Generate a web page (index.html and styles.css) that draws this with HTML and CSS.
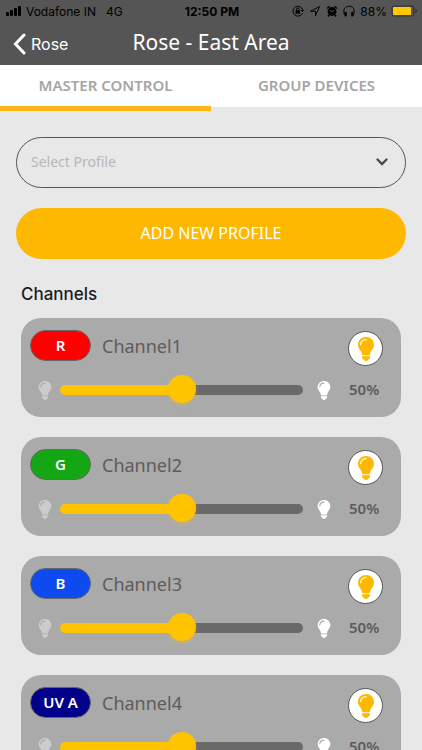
FILE: index.html
```html
<!DOCTYPE html>
<html lang="en">
<head>
  <meta charset="UTF-8">
  <meta name="viewport" content="width=device-width, initial-scale=1.0">
  <title>Rose - East Area</title>
  <link rel="stylesheet" href="styles.css">
</head>
<body>
  <svg class="symbols" aria-hidden="true">
    <symbol id="bulb" viewBox="0 0 16 24">
      <path fill="currentColor" stroke="none" d="M8 0C3.500 0 0 3.400 0 7.700C0 12 3.600 13.500 4 17.300Q4.100 18.200 5 18.200H11Q11.900 18.200 12 17.300C12.400 13.500 16 12 16 7.700C16 3.400 12.500 0 8 0Z"/>
      <path fill="currentColor" stroke="none" d="M4 19.300H12V20.600Q12 21.800 10.700 22.200Q10.200 24 8 24Q5.800 24 5.300 22.200Q4 21.800 4 20.600Z"/>
      <path fill="none" stroke-width="1.300" stroke-linecap="round" d="M2.700 7.700C2.700 4.800 5 2.800 8 2.700"/>
    </symbol>
  </svg>

  <header class="header">
    <div class="status">
      <div class="status-left">
        <svg class="signal" viewBox="0 0 16 10" width="16" height="10" aria-hidden="true">
          <rect x="0" y="6" width="3" height="4" rx="1"/>
          <rect x="4" y="4" width="3" height="6" rx="1"/>
          <rect x="8" y="2" width="3" height="8" rx="1"/>
          <rect x="12" y="0" width="3" height="10" rx="1"/>
        </svg>
        <span>Vodafone IN</span>
        <span class="network">4G</span>
      </div>
      <strong>12:50 PM</strong>
      <div class="status-right">
        <svg viewBox="0 0 12 12" width="12" height="12" aria-hidden="true">
          <path d="M10.300 8.500A4.900 4.900 0 1 1 10.700 5" fill="none" stroke="#000"/>
          <path d="M9 5H12L10.500 7.200Z"/>
          <rect x="3.500" y="5.200" width="4.600" height="3.500" rx=".5"/>
          <path d="M4.500 5.500V4.300A1.300 1.300 0 0 1 7.100 4.300V5.500" fill="none" stroke="#000"/>
        </svg>
        <svg viewBox="0 0 12 12" width="12" height="12" aria-hidden="true">
          <path d="M1.500 6.300L10.500 1.500L6.500 10.700V6.300Z" fill="none" stroke="#000" stroke-linejoin="round"/>
        </svg>
        <svg viewBox="0 0 12 12" width="12" height="12" aria-hidden="true">
          <circle cx="6" cy="6.500" r="4.400"/>
          <path d="M1.500 3L3 1.800M9 1.800L10.500 3M3 10L2.300 11M9 10L9.700 11" stroke="#000" stroke-width="1.500" stroke-linecap="round"/>
          <path d="M3.700 5L6 6.700L8 5.500" fill="none" stroke="#555"/>
        </svg>
        <svg viewBox="0 0 12 12" width="12" height="12" aria-hidden="true">
          <path d="M1.500 10C-.5 4 2.500 1.200 6 1.200S12.500 4 10.500 10" fill="none" stroke="#000"/>
          <rect x="1.500" y="6.700" width="2.300" height="4.800" rx="1"/>
          <rect x="8.200" y="6.700" width="2.300" height="4.800" rx="1"/>
        </svg>
        <span>88%</span>
        <svg viewBox="0 0 27 12" width="27" height="12" aria-hidden="true">
          <rect x="1" y="1" width="22" height="10" rx="2" fill="none" stroke="#303030"/>
          <rect x="2" y="2" width="18" height="8" rx="1" fill="#ffc800"/>
          <path d="M24.500 4Q26 5 26 6T24.500 8Z" fill="#303030"/>
        </svg>
      </div>
    </div>
    <nav class="navbar">
      <a class="back" href="#">
        <svg viewBox="0 0 13 22" width="13" height="22" aria-hidden="true">
          <path d="M11 2L2.500 11L11 20" fill="none" stroke="#fff" stroke-width="3" stroke-linecap="round"/>
        </svg>
        Rose
      </a>
      <h1>Rose - East Area</h1>
    </nav>
  </header>

  <nav class="tabs">
    <a class="tab active" href="#">MASTER CONTROL</a>
    <a class="tab" href="#">GROUP DEVICES</a>
  </nav>

  <main>
    <div class="profile">
      <div class="select-box">
        <select aria-label="Profile">
          <option>Select Profile</option>
        </select>
        <svg class="chevron" viewBox="0 0 12 8" width="12" height="8" aria-hidden="true">
          <path d="M1.500 1.500L6 6L10.500 1.500" fill="none" stroke="#484848" stroke-width="2.300" stroke-linecap="round"/>
        </svg>
      </div>
      <button class="add" type="button">ADD NEW PROFILE</button>
    </div>

    <h2>Channels</h2>

    <div class="channels">
      <section class="channel">
        <div class="channel-top">
          <span class="badge red">R</span>
          <label for="channel1">Channel1</label>
          <button class="toggle" type="button" aria-label="Switch Channel1"><svg><use href="#bulb"/></svg></button>
        </div>
        <div class="channel-level">
          <svg class="bulb dim"><use href="#bulb"/></svg>
          <input type="range" id="channel1" min="0" max="100" value="50" style="--level: 50%">
          <svg class="bulb bright"><use href="#bulb"/></svg>
          <output for="channel1">50%</output>
        </div>
      </section>

      <section class="channel">
        <div class="channel-top">
          <span class="badge green">G</span>
          <label for="channel2">Channel2</label>
          <button class="toggle" type="button" aria-label="Switch Channel2"><svg><use href="#bulb"/></svg></button>
        </div>
        <div class="channel-level">
          <svg class="bulb dim"><use href="#bulb"/></svg>
          <input type="range" id="channel2" min="0" max="100" value="50" style="--level: 50%">
          <svg class="bulb bright"><use href="#bulb"/></svg>
          <output for="channel2">50%</output>
        </div>
      </section>

      <section class="channel">
        <div class="channel-top">
          <span class="badge blue">B</span>
          <label for="channel3">Channel3</label>
          <button class="toggle" type="button" aria-label="Switch Channel3"><svg><use href="#bulb"/></svg></button>
        </div>
        <div class="channel-level">
          <svg class="bulb dim"><use href="#bulb"/></svg>
          <input type="range" id="channel3" min="0" max="100" value="50" style="--level: 50%">
          <svg class="bulb bright"><use href="#bulb"/></svg>
          <output for="channel3">50%</output>
        </div>
      </section>

      <section class="channel">
        <div class="channel-top">
          <span class="badge uv">UV A</span>
          <label for="channel4">Channel4</label>
          <button class="toggle" type="button" aria-label="Switch Channel4"><svg><use href="#bulb"/></svg></button>
        </div>
        <div class="channel-level">
          <svg class="bulb dim"><use href="#bulb"/></svg>
          <input type="range" id="channel4" min="0" max="100" value="50" style="--level: 50%">
          <svg class="bulb bright"><use href="#bulb"/></svg>
          <output for="channel4">50%</output>
        </div>
      </section>
    </div>
  </main>

  <script>
    document.querySelectorAll('.channel').forEach((channel) => {
      const slider = channel.querySelector('input');
      const output = channel.querySelector('output');

      slider.addEventListener('input', () => {
        slider.style.setProperty('--level', slider.value + '%');
        output.textContent = slider.value + '%';
      });
    });
  </script>
</body>
</html>
```
FILE: styles.css
```css
* {
  box-sizing: border-box;
}

body {
  margin: 0;
  height: 100vh;
  display: flex;
  flex-direction: column;
  overflow: hidden;
  background-color: #e8e8e8;
  font-family: "Noto Sans", "Open Sans", sans-serif;
}

a {
  color: inherit;
  text-decoration: none;
}

.symbols {
  position: absolute;
  width: 0;
  height: 0;
}

/* Header */
.header {
  flex: none;
  background-color: #555555;
}

.status {
  display: grid;
  grid-template-columns: 1fr auto 1fr;
  align-items: center;
  height: 22px;
  padding: 0 4px 0 6px;
  font-family: Inter, sans-serif;
  font-size: 12px;
  color: #000000;
}

.status-left,
.status-right {
  display: flex;
  align-items: center;
  gap: 4px;
}

.status-right {
  justify-content: flex-end;
}

.network {
  margin-left: 6px;
}

.status-right svg:not(:last-child) {
  margin-right: 1px;
}

.navbar {
  display: grid;
  grid-template-columns: 1fr auto 1fr;
  align-items: center;
  height: 43px;
  padding: 0 13px;
  color: #ffffff;
}

.back {
  display: flex;
  align-items: center;
  gap: 5px;
  font-family: Inter, sans-serif;
  font-size: 16px;
}

h1 {
  margin: 0;
  padding-bottom: 4px;
  font-size: 21px;
  font-weight: normal;
  line-height: 36px;
}

/* Tabs */
.tabs {
  flex: none;
  display: grid;
  grid-template-columns: 1fr 1fr;
  height: 46px;
  background: linear-gradient(#ffffff 42px, #e8e8e8 42px);
}

.tab {
  padding-top: 8px;
  border-bottom: 5px solid transparent;
  text-align: center;
  font-size: 15px;
  font-weight: 600;
  line-height: 24px;
  color: #a5a5a5;
}

.tab.active {
  border-bottom-color: #ffb813;
}

main {
  flex: 1;
  min-height: 0;
  overflow-y: auto;
  scrollbar-width: none;
}

/* Profile */
.profile {
  display: flex;
  flex-direction: column;
  gap: 20px;
  padding: 26px 16px 0;
}

.select-box {
  display: grid;
  align-items: center;
}

.select-box select,
.chevron {
  grid-area: 1 / 1;
}

.select-box select {
  width: 100%;
  height: 51px;
  padding: 0 40px 2px 14px;
  border: 1px solid #555555;
  border-radius: 26px;
  background: none;
  appearance: none;
  font: 14px "Noto Sans", sans-serif;
  color: #b7b7bb;
}

.chevron {
  justify-self: end;
  margin: 0 18px 2px 0;
  pointer-events: none;
}

.add {
  height: 51px;
  padding: 0 0 2px;
  border: none;
  border-radius: 26px;
  background-color: #ffb800;
  font: 16px "Noto Sans", sans-serif;
  color: #ffffff;
  cursor: pointer;
}

h2 {
  margin: 25px 21px 14px;
  font-family: Inter, sans-serif;
  font-size: 17px;
  font-weight: 500;
  line-height: 20px;
  color: #1c1c1e;
}

/* Channels */
.channels {
  display: flex;
  flex-direction: column;
  gap: 20px;
  padding: 0 21px 20px;
}

.channel {
  display: flex;
  flex-direction: column;
  gap: 10px;
  padding: 12px 18px 13px 9px;
  border-radius: 20px;
  background-color: #aaaaaa;
}

.channel-top {
  display: flex;
  align-items: flex-start;
  height: 36px;
}

.badge {
  width: 61px;
  height: 31px;
  border: 1px solid #666666;
  border-radius: 16px;
  text-align: center;
  font-size: 15px;
  font-weight: 600;
  line-height: 28px;
  color: #ffffff;
}

.red {
  background-color: #ff0000;
}

.green {
  background-color: #15a615;
}

.blue {
  background-color: #0d4bf0;
}

.uv {
  background-color: #00008b;
}

.channel label {
  flex: 1;
  margin-left: 11px;
  font-size: 18px;
  line-height: 32px;
  color: #5c5c5c;
}

.toggle {
  align-self: flex-end;
  display: flex;
  align-items: center;
  justify-content: center;
  width: 35px;
  height: 35px;
  padding: 0;
  border: 1px solid #555555;
  border-radius: 50%;
  background-color: #ffffff;
  color: #ffb800;
  cursor: pointer;
}

.toggle svg {
  width: 16px;
  height: 24px;
  stroke: #ffffff;
}

.channel-level {
  display: flex;
  align-items: center;
  height: 28px;
  padding-left: 8px;
}

.bulb {
  width: 14px;
  height: 19px;
  stroke: #aaaaaa;
}

.dim {
  margin-right: 8px;
  color: #cccccc;
}

.bright {
  margin: 0 18px 0 14px;
  color: #ffffff;
}

input[type="range"] {
  flex: 1;
  min-width: 0;
  height: 28px;
  margin: 0;
  background: none;
  appearance: none;
}

input[type="range"]::-webkit-slider-runnable-track {
  height: 10px;
  border-radius: 5px;
  background: linear-gradient(to right, #ffc400 var(--level), #696969 var(--level));
}

input[type="range"]::-webkit-slider-thumb {
  width: 28px;
  height: 28px;
  margin-top: -10px;
  border-radius: 50%;
  background-color: #ffc400;
  box-shadow: 0 2px 4px rgba(255, 196, 0, 0.3);
  appearance: none;
}

output {
  width: 34px;
  padding-bottom: 2px;
  font-size: 15px;
  font-weight: 600;
  line-height: 22px;
  color: #5c5c5c;
}
```
